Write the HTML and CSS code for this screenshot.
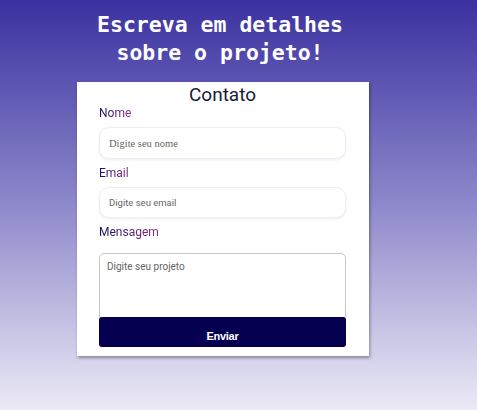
FILE: index.html
```html
<!DOCTYPE html>
<html lang="pt-BR">
<head>
<meta charset="utf-8">
<title>Contato</title>
<link rel="stylesheet" href="styles.css">
</head>
<body>
<main class="wrap">
  <h1 class="title">Escreva em detalhes<br>sobre o projeto!</h1>
  <form class="card">
    <h2 class="card-title">Contato</h2>
    <label class="label" for="nome">Nome</label>
    <input class="field field-serif" id="nome" type="text" placeholder="Digite seu nome">
    <label class="label" for="email">Email</label>
    <input class="field" id="email" type="email" placeholder="Digite seu email">
    <label class="label label-msg" for="msg">Mensagem</label>
    <textarea class="area" id="msg" placeholder="Digite seu projeto"></textarea>
    <button class="send" type="button">Enviar</button>
  </form>
</main>
</body>
</html>
```
FILE: styles.css
```css
html, body {
  margin: 0;
  height: 100%;
}
body {
  background: linear-gradient(180deg, #3a31a0 0%, #8e89cb 50%, #eceaf6 100%);
  font-family: Roboto, "Liberation Sans", sans-serif;
  overflow: hidden;
}
.wrap {
  width: 292px;
  margin-left: 77px;
  display: flex;
  flex-direction: column;
}
.title {
  margin: 11px -34px 0 -40px;
  font-family: "DejaVu Sans Mono", monospace;
  font-size: 21.5px;
  line-height: 28px;
  font-weight: bold;
  color: #fff;
  text-align: center;
}
.card {
  margin-top: 15px;
  background: #fff;
  padding: 2px 23px 9px 22px;
  display: flex;
  flex-direction: column;
  box-shadow: 1px 2px 3px rgba(0, 0, 0, 0.35);
}
.card-title {
  margin: 0;
  font-size: 19px;
  line-height: 22px;
  font-weight: 400;
  color: #161a36;
  text-align: center;
}
.label {
  font-size: 12px;
  line-height: 14px;
  width: max-content;
  background: linear-gradient(90deg, #14105e, #8e2a88);
  -webkit-background-clip: text;
  background-clip: text;
  color: transparent;
}
.field {
  margin: 7px 0;
  height: 31px;
  box-sizing: border-box;
  border: 1px solid #eceef8;
  border-radius: 10px;
  box-shadow: 0 1px 3px rgba(20, 20, 80, 0.08);
  padding: 0 9px;
  font-family: Roboto, "Liberation Sans", sans-serif;
  font-size: 9.5px;
  outline: none;
}
.field-serif {
  height: 32px;
  font-family: "Liberation Serif", serif;
  font-size: 10.5px;
}
.field::placeholder {
  color: #666;
}
.label-msg {
  margin-bottom: 14px;
}
.area {
  height: 65px;
  box-sizing: border-box;
  border: 1px solid #c6c6c6;
  border-radius: 5px 5px 0 0;
  padding: 7px 7px;
  font-family: Roboto, "Liberation Sans", sans-serif;
  font-size: 10px;
  resize: none;
  outline: none;
}
.area::placeholder {
  color: #666;
}
.send {
  margin-top: -1px;
  height: 30px;
  border: none;
  border-radius: 3px;
  background: #050050;
  color: #fff;
  font-family: "Liberation Sans Narrow", "Liberation Sans", sans-serif;
  font-weight: bold;
  font-size: 11px;
  padding: 8px 0 0;
  letter-spacing: -0.3px;
}
```
